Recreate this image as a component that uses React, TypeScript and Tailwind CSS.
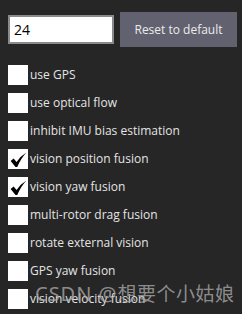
import React from "react";

const items: { label: string; checked: boolean }[] = [
  { label: "use GPS", checked: false },
  { label: "use optical flow", checked: false },
  { label: "inhibit IMU bias estimation", checked: false },
  { label: "vision position fusion", checked: true },
  { label: "vision yaw fusion", checked: true },
  { label: "multi-rotor drag fusion", checked: false },
  { label: "rotate external vision", checked: false },
  { label: "GPS yaw fusion", checked: false },
  { label: "vision velocity fusion", checked: false },
];

function Check() {
  return (
    <svg width="17" height="16" viewBox="0 0 16 15" className="block mt-[1px]">
      <path
        d="M0.6 8.4 L3.4 6.2 L6.2 9.4 Q9.5 4.0 15.4 0.4 Q10.8 5.2 6.8 14 L5.2 14 Z"
        fill="#000"
      />
    </svg>
  );
}

export default function App() {
  return (
    <div
      className="relative w-[242px] h-[314px] overflow-hidden bg-[#262626] text-[#e4e4e4]"
      style={{ fontFamily: '"Open Sans", "Noto Sans", sans-serif' }}
    >
      <div className="flex items-center gap-[6px] pl-[8px] pt-[12px]">
        <div className="w-[106px] h-[29px] bg-white border-2 border-[#8a8a8a] flex items-center pl-[4px] text-[14px] text-black">
          24
        </div>
        <div className="w-[117px] h-[35px] bg-[#62616f] flex items-center justify-center text-[12px] text-[#ececec]">
          Reset to default
        </div>
      </div>
      <div className="flex flex-col gap-[8px] pl-[8px] pt-[18px]">
        {items.map((it) => (
          <div key={it.label} className="flex items-center h-[20px]">
            <div className="w-[20px] h-[20px] bg-white flex items-center justify-center shrink-0">
              {it.checked && <Check />}
            </div>
            <span className="ml-[2px] text-[12px] leading-[20px] whitespace-nowrap">{it.label}</span>
          </div>
        ))}
      </div>
      <div
        className="absolute left-[35px] top-[281px] leading-[26px] text-[#a8a8a8]/80 whitespace-nowrap"
        style={{ fontFamily: '"Noto Sans", "Noto Sans CJK SC", sans-serif' }}
      >
        <span className="text-[20px] tracking-[1px]">CSDN @</span>
        <span className="text-[19px] tracking-[0.5px]">想要个小姑娘</span>
      </div>
    </div>
  );
}
